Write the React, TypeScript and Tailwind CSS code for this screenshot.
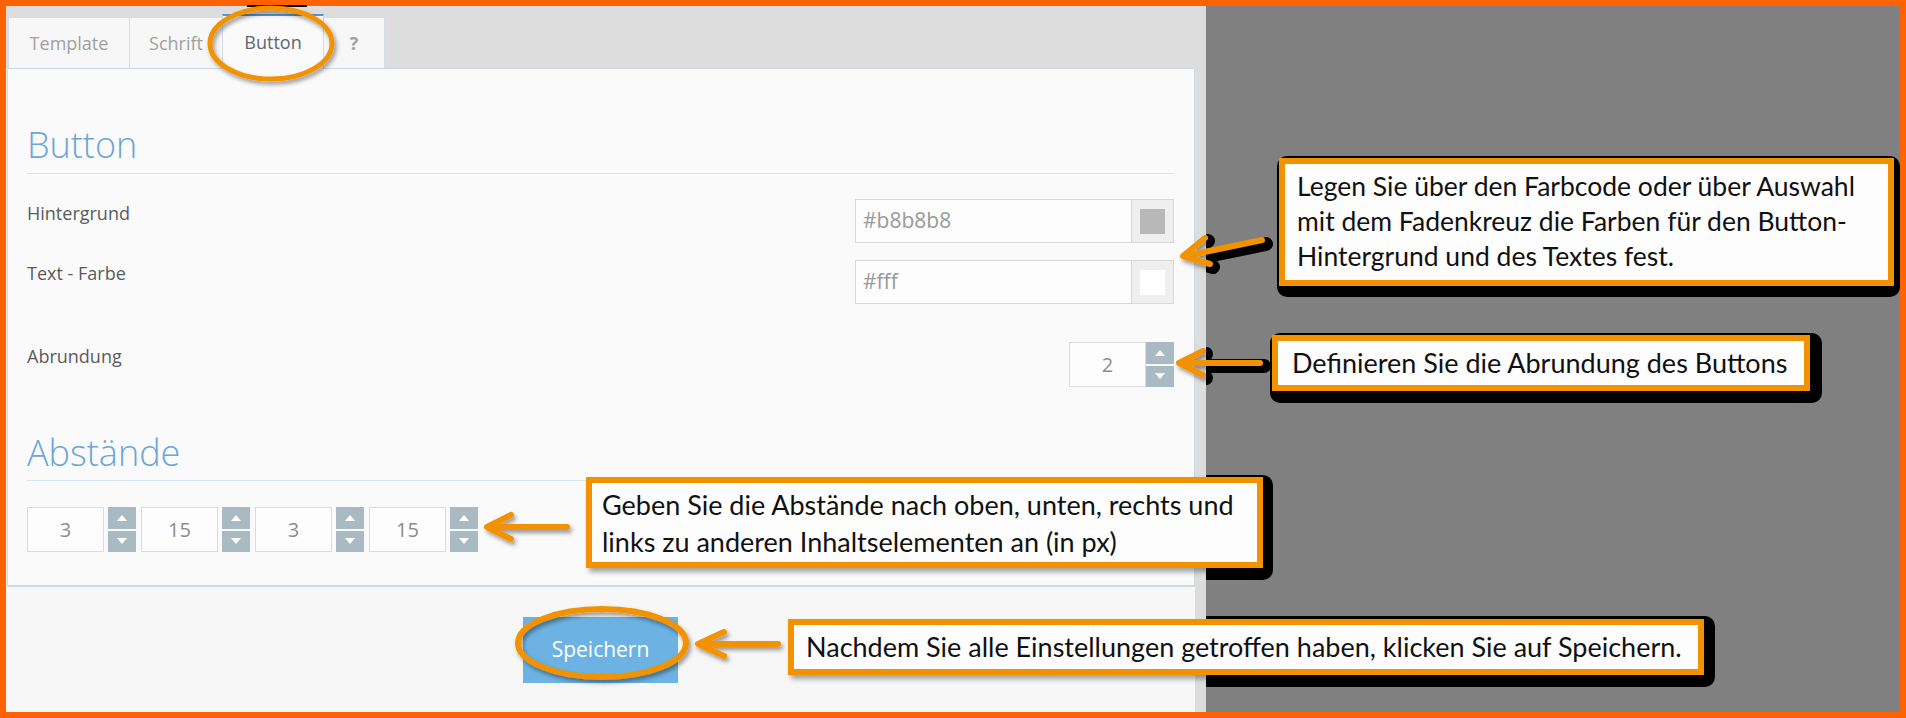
const ORANGE = '#f39200';

function Tri({ up }: { up?: boolean }) {
  return (
    <svg width="10" height="6" viewBox="0 0 10 6">
      <polygon points={up ? '0,6 5,0 10,6' : '0,0 5,6 10,0'} fill="#ffffff" />
    </svg>
  );
}

function Spinner({ value, gap }: { value: string; gap?: boolean }) {
  return (
    <div className={gap ? 'flex h-[45px] gap-[4px]' : 'flex h-[45px]'}>
      <div className="flex w-[77px] items-center justify-center border border-[#dcdcdc] bg-[#fdfdfd] text-[20px] text-[#8c8c8c]">
        {value}
      </div>
      <div className="flex w-[28px] flex-col gap-[2px]">
        <div className="flex flex-1 items-center justify-center bg-[#a9bac3]">
          <Tri up />
        </div>
        <div className="flex flex-1 items-center justify-center bg-[#a9bac3]">
          <Tri />
        </div>
      </div>
    </div>
  );
}

function ColorInput({ value, swatch }: { value: string; swatch: string }) {
  return (
    <div className="flex h-[44px] w-[319px] border border-[#d9d9d9] bg-[#fdfdfd]">
      <div className="flex flex-1 items-center pl-[7px] text-[21px] text-[#9a9a9a]">{value}</div>
      <div className="flex w-[42px] items-center justify-center border-l border-[#d9d9d9] bg-[#efefef]">
        <div className={`h-[25px] w-[25px] ${swatch}`} />
      </div>
    </div>
  );
}

function Heading({ children, className }: { children: string; className: string }) {
  return (
    <div className={`border-b border-[#d5e4f1] text-[36px] font-light leading-[43px] text-[#6aa6d9] ${className}`}>
      {children}
    </div>
  );
}

const TABS = [
  { label: 'Template', w: 'w-[122px]' },
  { label: 'Schrift', w: 'w-[94px]' },
  { label: 'Button', w: 'w-[102px]', active: true },
  { label: '?', w: 'w-[62px]', bold: true },
];

export default function App() {
  return (
    <div className="relative h-[718px] w-[1906px] overflow-hidden bg-[#ff6200] p-[6px] font-['Open_Sans',sans-serif]">
      <div className="flex h-full w-full bg-[#808080]">
        <div className="relative z-10 flex h-full w-[1200px] flex-col bg-[#dddddd]">
          {/* tabs */}
          <div className="flex h-[62px] items-end pl-[2px]">
            {TABS.map((t, i) =>
              t.active ? (
                <div
                  key={t.label}
                  className={`relative top-px z-10 -ml-px flex h-[55px] items-center justify-center border border-b-0 border-[#d3dde7] border-t-2 border-t-[#5d93c9] bg-[#fafafa] text-[18px] text-[#5c6676] ${t.w}`}
                >
                  {t.label}
                </div>
              ) : (
                <div
                  key={t.label}
                  className={`flex h-[51px] items-center justify-center border border-b-0 border-[#d3dde7] bg-[#f7f7f7] text-[18px] text-[#a0a0a0] ${t.bold ? 'font-bold' : ''} ${i > 0 ? '-ml-px' : ''} ${t.w}`}
                >
                  {t.label}
                </div>
              ),
            )}
          </div>

          <div className="flex w-[1189px] flex-1 flex-col bg-[#f7f7f7]">
            {/* panel */}
            <div className="ml-px w-[1188px] border border-b-2 border-[#cfd9e3] bg-[#fafafa] pt-[54px] pr-[20px] pb-[33px] pl-[19px]">
              <Heading className="pb-[7px]">Button</Heading>

              <div className="mt-[25px] flex items-start justify-between">
                <div className="pt-[4px] text-[18px] leading-[20px] text-[#5a5a5a]">Hintergrund</div>
                <ColorInput value="#b8b8b8" swatch="bg-[#b8b8b8]" />
              </div>
              <div className="mt-[17px] flex items-start justify-between">
                <div className="pt-[3px] text-[18px] leading-[20px] text-[#5a5a5a]">Text - Farbe</div>
                <ColorInput value="#fff" swatch="bg-white" />
              </div>
              <div className="mt-[38px] flex items-start justify-between">
                <div className="pt-[4px] text-[18px] leading-[20px] text-[#5a5a5a]">Abrundung</div>
                <Spinner value="2" />
              </div>

              <Heading className="mt-[44px] pb-[6px]">Abstände</Heading>

              <div className="mt-[26px] flex gap-[5px]">
                <Spinner value="3" gap />
                <Spinner value="15" gap />
                <Spinner value="3" gap />
                <Spinner value="15" gap />
              </div>
            </div>

            {/* footer */}
            <div className="flex flex-1 items-center justify-center">
              <button className="flex h-[66px] w-[155px] items-center justify-center bg-[#6cb3e3] text-[21px] text-white">
                Speichern
              </button>
            </div>
          </div>
        </div>
      </div>

      {/* black callout backings, hidden where they pass behind the page */}
      <div className="absolute top-[156px] left-[1277px] z-0 h-[141px] w-[623px] rounded-[10px] bg-black" />
      <div className="absolute top-[333px] left-[1270px] z-0 h-[70px] w-[552px] rounded-[10px] bg-black" />
      <div className="absolute top-[475px] left-[584px] z-0 h-[105px] w-[689px] rounded-[10px] bg-black" />
      <div className="absolute top-[616px] left-[786px] z-0 h-[71px] w-[929px] rounded-[10px] bg-black" />
      <svg className="pointer-events-none absolute top-0 left-0 z-0" width="1906" height="718">
        <g stroke="#000" strokeWidth="14" strokeLinecap="round" strokeLinejoin="round" fill="none">
          <polyline points="1188,260 1266,244" />
          <polyline points="1188,366 1264,366" />
          <polyline points="1213,267 1187,259 1208,241" />
          <polyline points="1206,378 1182,366 1206,354" />
        </g>
      </svg>

      {/* callouts */}
      <div className="absolute top-[158px] left-[1279px] z-20 flex h-[128px] w-[615px] flex-col justify-center border-[6px] border-[#f39200] bg-[#fdfdfd] px-[12px] pb-[1px] font-['Lato',sans-serif] text-[26.5px] leading-[35px] whitespace-nowrap text-[#111]">
        <div>Legen Sie über den Farbcode oder über Auswahl</div>
        <div>mit dem Fadenkreuz die Farben für den Button-</div>
        <div>Hintergrund und des Textes fest.</div>
      </div>
      <div className="absolute top-[335px] left-[1272px] z-20 flex h-[56px] w-[538px] items-center border-[6px] border-[#f39200] bg-[#fdfdfd] px-[14px] font-['Lato',sans-serif] text-[27px] whitespace-nowrap text-[#111]">
        Definieren Sie die Abrundung des Buttons
      </div>
      <div className="absolute top-[477px] left-[586px] z-20 flex h-[91px] w-[677px] flex-col justify-center border-[6px] border-[#f39200] bg-[#fdfdfd] px-[10px] font-['Lato',sans-serif] text-[27px] leading-[37px] whitespace-nowrap text-[#111] shadow-[3px_4px_5px_rgba(0,0,0,0.35)]">
        <div>Geben Sie die Abstände nach oben, unten, rechts und</div>
        <div>links zu anderen Inhaltselementen an (in px)</div>
      </div>
      <div className="absolute top-[619px] left-[788px] z-20 flex h-[56px] w-[916px] items-center border-[6px] border-[#f39200] bg-[#fdfdfd] px-[12px] font-['Lato',sans-serif] text-[27px] whitespace-nowrap text-[#111] shadow-[3px_4px_5px_rgba(0,0,0,0.35)]">
        Nachdem Sie alle Einstellungen getroffen haben, klicken Sie auf Speichern.
      </div>

      {/* arrows and circles */}
      <svg className="pointer-events-none absolute top-0 left-0 z-30" width="1906" height="718">
        <defs>
          <filter id="soft" x="-20%" y="-20%" width="140%" height="140%">
            <feDropShadow dx="2" dy="3" stdDeviation="2" floodColor="#000" floodOpacity="0.4" />
          </filter>
        </defs>
        <rect x="247" y="5" width="60" height="2" fill="#000" />
        <g stroke={ORANGE} strokeWidth="6" strokeLinecap="round" strokeLinejoin="round" fill="none" filter="url(#soft)">
          <ellipse cx="271" cy="43.5" rx="61" ry="35.5" strokeWidth="5" />
          <ellipse cx="602" cy="643" rx="84" ry="34" />
          <polyline points="1262,240 1185,256" />
          <polyline points="1210,264 1183,256 1205,238" />
          <polyline points="1260,363 1181,363" />
          <polyline points="1203,351 1179,363 1203,375" />
          <polyline points="567,527 489,527" />
          <polyline points="511,515 487,527 511,539" />
          <polyline points="778,644 700,644" />
          <polyline points="724,632 698,644 724,656" />
        </g>
      </svg>
    </div>
  );
}
